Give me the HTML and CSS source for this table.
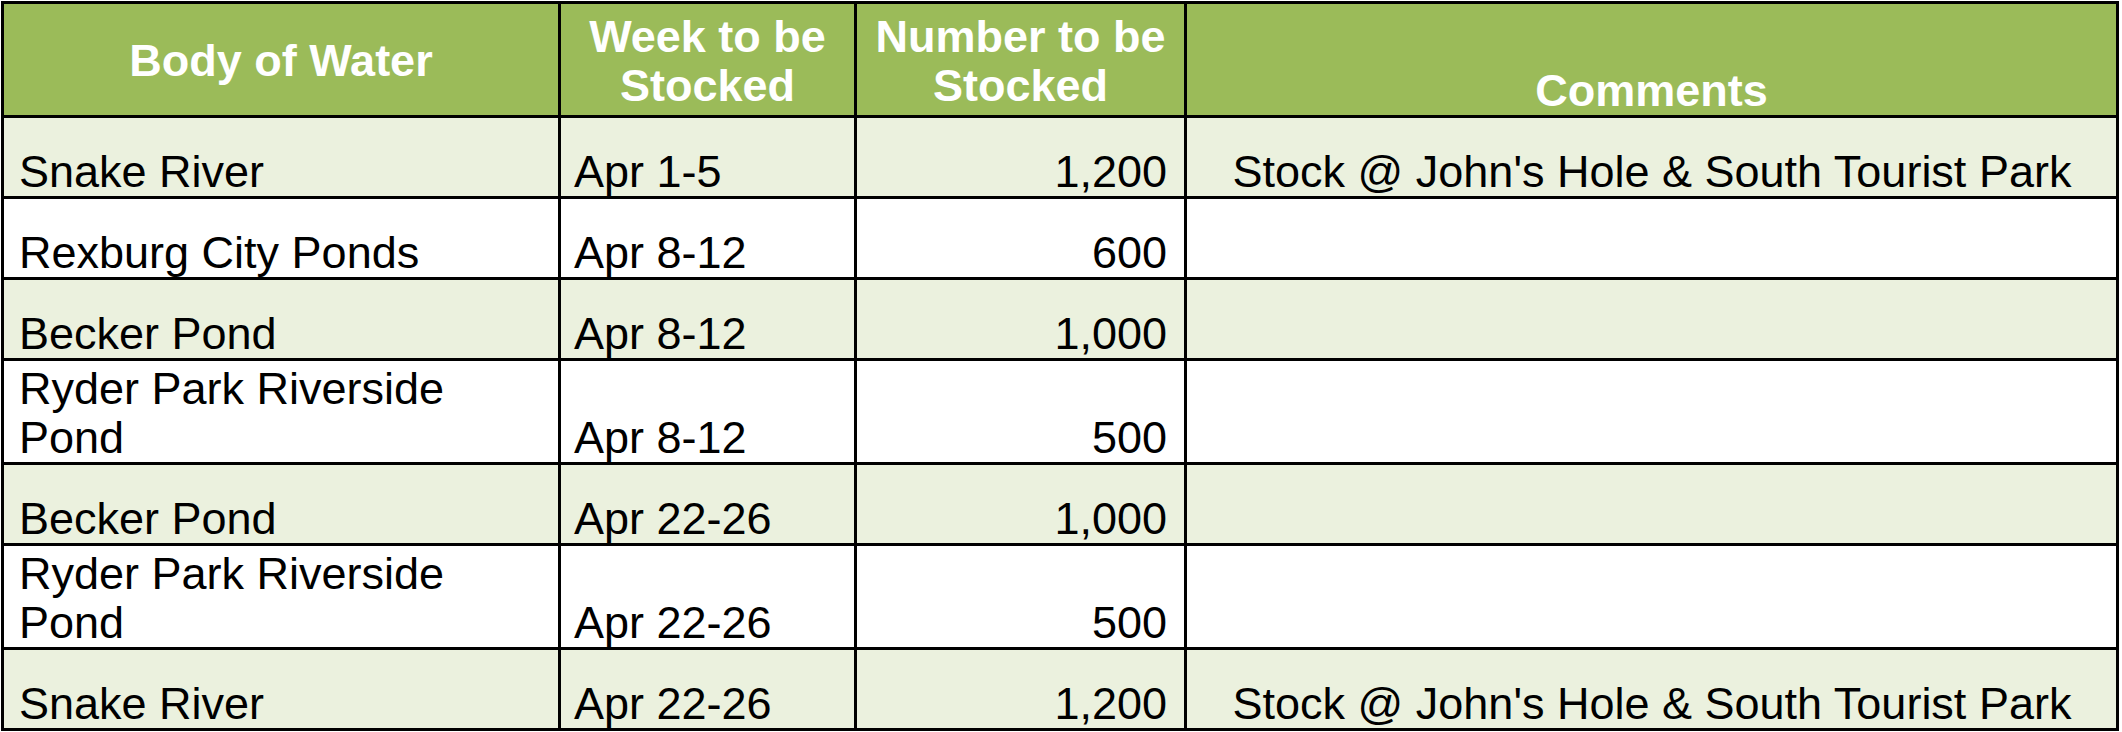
FILE: index.html
```html
<!DOCTYPE html>
<html>
<head>
<meta charset="utf-8">
<link rel="stylesheet" href="styles.css">
</head>
<body>
<table class="stock">
  <colgroup>
    <col class="c-body">
    <col class="c-week">
    <col class="c-num">
    <col class="c-com">
  </colgroup>
  <thead>
    <tr class="head">
      <th class="mid">Body of Water</th>
      <th class="mid">Week to be<br>Stocked</th>
      <th class="mid">Number to be<br>Stocked</th>
      <th class="bot">Comments</th>
    </tr>
  </thead>
  <tbody>
    <tr class="r1 alt">
      <td>Snake River</td><td class="wk">Apr 1-5</td><td class="num">1,200</td><td class="com">Stock @ John's Hole &amp; South Tourist Park</td>
    </tr>
    <tr class="r1">
      <td>Rexburg City Ponds</td><td class="wk">Apr 8-12</td><td class="num">600</td><td class="com"></td>
    </tr>
    <tr class="r1 alt">
      <td>Becker Pond</td><td class="wk">Apr 8-12</td><td class="num">1,000</td><td class="com"></td>
    </tr>
    <tr class="r2">
      <td>Ryder Park Riverside<br>Pond</td><td class="wk">Apr 8-12</td><td class="num">500</td><td class="com"></td>
    </tr>
    <tr class="r1 alt">
      <td>Becker Pond</td><td class="wk">Apr 22-26</td><td class="num">1,000</td><td class="com"></td>
    </tr>
    <tr class="r2">
      <td>Ryder Park Riverside<br>Pond</td><td class="wk">Apr 22-26</td><td class="num">500</td><td class="com"></td>
    </tr>
    <tr class="r1 alt">
      <td>Snake River</td><td class="wk">Apr 22-26</td><td class="num">1,200</td><td class="com">Stock @ John's Hole &amp; South Tourist Park</td>
    </tr>
  </tbody>
</table>
</body>
</html>
```

FILE: styles.css
```css
html, body {
  margin: 0;
  padding: 0;
  background: #ffffff;
}
body {
  padding: 1px 0 0 1px;
}
.stock {
  border-collapse: collapse;
  table-layout: fixed;
  width: 2118px;
  font-family: "Liberation Sans", Arial, sans-serif;
  font-size: 45px;
  line-height: 49px;
  color: #000;
}
.c-body { width: 557px; }
.c-week { width: 296px; }
.c-num { width: 330px; }
.c-com { width: 932px; }
.stock th, .stock td {
  border: 3px solid #000;
  padding: 0 14px 0 15px;
  white-space: nowrap;
  vertical-align: bottom;
  text-align: left;
}
.head {
  height: 114px;
  background: #9bbb59;
}
.stock th {
  color: #ffffff;
  font-weight: bold;
  text-align: center;
  padding: 0 10px;
}
.stock th.mid { vertical-align: middle; padding-top: 2px; }
.stock th.bot { vertical-align: bottom; padding-bottom: 0; }
.r1 { height: 81px; }
.r2 { height: 104px; }
.alt { background: #ebf1de; }
.stock td.wk { padding-left: 13px; }
.stock td.num { text-align: right; padding-right: 17px; }
.stock td.com { text-align: center; }
```
